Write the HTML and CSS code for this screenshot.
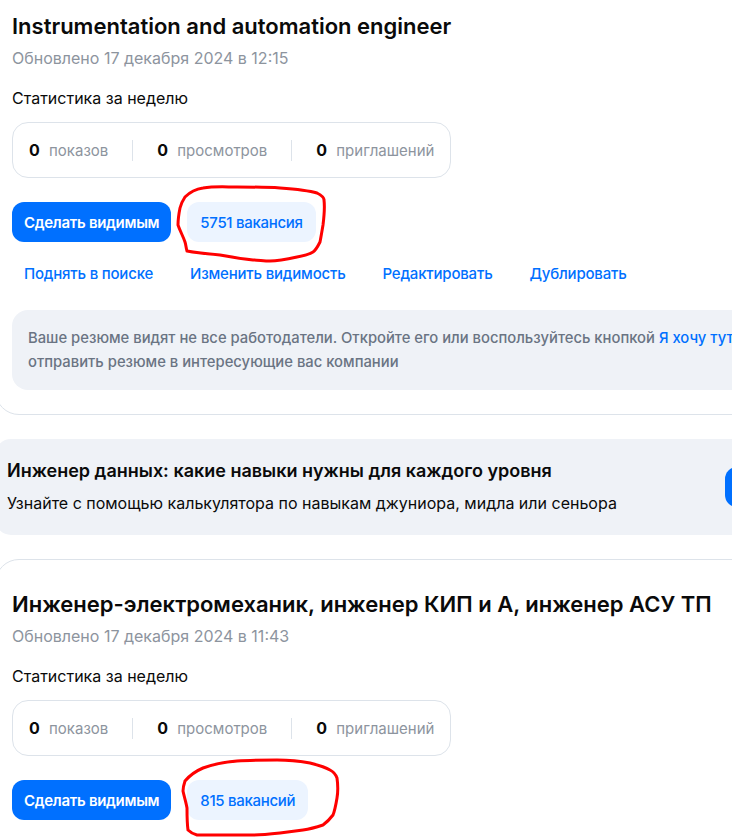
FILE: index.html
```html
<!DOCTYPE html>
<html>
<head>
  <meta charset="utf-8">
  <link rel="stylesheet" href="styles.css">
</head>
<body>
  <div class="page">
    <div class="resume-card">
      <div class="resume-title">Instrumentation and automation engineer</div>
      <div class="resume-updated">Обновлено 17 декабря 2024 в 12:15</div>

      <div class="stats-label">Статистика за неделю</div>
      <div class="stats">
        <div class="stat"><b>0</b> показов</div>
        <div class="stat-divider"></div>
        <div class="stat"><b>0</b> просмотров</div>
        <div class="stat-divider"></div>
        <div class="stat"><b>0</b> приглашений</div>
      </div>

      <div class="actions">
        <button class="btn-primary">Сделать видимым</button>
        <button class="btn-pill">5751 вакансия</button>
        <!-- hand drawn marker -->
        <svg class="scribble scribble-first" viewBox="172 182 180 90" width="180" height="90">
          <path d="M185 197 C190 192 196 189 203 188 C215 186 226 187 237 187 C252 187 266 187 280 188 C294 189 307 190 317 193 C321 195 324 197 324 200 C325 208 324 217 323 225 C322 231 321 237 320 242 C318 246 316 250 313 252 C308 255 303 256 297 257 C288 259 279 261 270 261 C264 261 258 260 253 260 C242 259 231 257 220 255 C209 254 198 253 187 251 C186 248 186 245 185 242 C183 236 180 231 178 225 C178 219 179 213 180 208 C181 204 183 200 185 197"/>
        </svg>
      </div>

      <div class="links">
        <a class="link">Поднять в поиске</a>
        <a class="link">Изменить видимость</a>
        <a class="link">Редактировать</a>
        <a class="link">Дублировать</a>
      </div>

      <div class="notice">
        Ваше резюме видят не все работодатели. Откройте его или воспользуйтесь кнопкой <a class="notice-link">Я хочу тут работать</a>, чтобы отправить резюме в интересующие вас компании
      </div>
    </div>

    <div class="promo">
      <div class="promo-text">
        <div class="promo-title">Инженер данных: какие навыки нужны для каждого уровня</div>
        <div class="promo-sub">Узнайте с помощью калькулятора по навыкам джуниора, мидла или сеньора</div>
      </div>
      <button class="btn-primary">Рассчитать</button>
    </div>

    <div class="resume-card">
      <div class="resume-title">Инженер-электромеханик, инженер КИП и А, инженер АСУ ТП</div>
      <div class="resume-updated">Обновлено 17 декабря 2024 в 11:43</div>

      <div class="stats-label">Статистика за неделю</div>
      <div class="stats">
        <div class="stat"><b>0</b> показов</div>
        <div class="stat-divider"></div>
        <div class="stat"><b>0</b> просмотров</div>
        <div class="stat-divider"></div>
        <div class="stat"><b>0</b> приглашений</div>
      </div>

      <div class="actions">
        <button class="btn-primary">Сделать видимым</button>
        <button class="btn-pill">815 вакансий</button>
        <svg class="scribble scribble-second" viewBox="172 758 180 90" width="180" height="90">
          <path d="M185 783 C190 777 196 773 203 770 C214 766 226 764 237 763 C250 762 264 762 277 762 C289 762 300 763 310 765 C318 767 325 769 330 772 C334 774 336 777 337 780 C338 787 338 794 337 800 C336 806 335 812 333 817 C330 821 327 824 323 827 C317 829 310 831 303 832 C295 833 288 834 280 835 C271 836 262 837 253 837 C242 837 231 837 220 837 C212 837 204 837 197 837 C193 836 190 834 188 832 C187 825 187 817 187 810 C186 804 184 798 183 793 C183 789 184 786 185 783"/>
        </svg>
      </div>

      <div class="links">
        <a class="link">Поднять в поиске</a>
        <a class="link">Изменить видимость</a>
        <a class="link">Редактировать</a>
        <a class="link">Дублировать</a>
      </div>
    </div>
  </div>
</body>
</html>
```

FILE: styles.css
```css
:root {
  --text: #0a0a0a;
  --muted: #8d949e;
  --notice-text: #6a7483;
  --blue: #0070ff;
  --blue-soft: #ecf4ff;
  --gray-bg: #eff2f7;
  --border: #dde3ea;
  --radius: 12px;
  --font-sans: "Inter", "Roboto", "Noto Sans", sans-serif;
}

html,
body {
  overflow: hidden;
}

body {
  margin: 0;
  background: #fff;
  color: var(--text);
  font-family: var(--font-sans);
  font-size: 16px;
  line-height: 24px;
}

.page {
  width: 937px;
  margin: -19px 0 0 -5px;
}

.resume-card {
  border: 1px solid var(--border);
  border-radius: 24px;
  padding: 30px 16px 24px;
}

.resume-title {
  font-size: 22px;
  line-height: 28px;
  font-weight: 600;
  margin-bottom: 6px;
}

.resume-updated {
  color: var(--muted);
}

.stats-label {
  margin-top: 16px;
}

.stats {
  display: inline-flex;
  align-items: center;
  gap: 24px;
  margin-top: 12px;
  padding: 15px 16px 14px;
  border: 1px solid var(--border);
  border-radius: 16px;
  color: var(--muted);
  font-size: 15px;
}

.stat b {
  color: var(--text);
  font-weight: 700;
  font-size: 16px;
  margin-right: 5px;
}

.stat-divider {
  width: 1px;
  height: 21px;
  background: var(--border);
}

/* buttons */
.actions {
  position: relative;
  display: flex;
  gap: 16px;
  margin-top: 24px;
}

.btn-primary,
.btn-pill {
  height: 40px;
  padding: 0 12px;
  border: 0;
  border-radius: var(--radius);
  font-family: var(--font-sans);
  font-size: 15px;
  letter-spacing: -0.3px;
  cursor: pointer;
}

.btn-primary {
  background: var(--blue);
  color: #fff;
  font-weight: 600;
}

.btn-pill {
  padding: 0 13px;
  background: var(--blue-soft);
  color: var(--blue);
  font-weight: 500;
}

.scribble {
  position: absolute;
  left: 160px;
  pointer-events: none;
}

.scribble path {
  fill: none;
  stroke: #f00;
  stroke-width: 3;
  stroke-linecap: round;
}

.scribble-first {
  top: -20px;
}

.scribble-second {
  top: -24px;
}

.links {
  display: flex;
  gap: 13px;
  margin-top: 12px;
}

.link {
  padding: 8px 12px;
  color: var(--blue);
  font-size: 15px;
  font-weight: 500;
  letter-spacing: -0.2px;
  cursor: pointer;
}

.notice {
  margin-top: 16px;
  padding: 16px;
  background: var(--gray-bg);
  border-radius: 16px;
  color: var(--notice-text);
  font-size: 14.8px;
  font-weight: 500;
}

.notice-link {
  color: var(--blue);
}

/* promo banner between resumes */
.promo {
  display: flex;
  align-items: center;
  margin: 24px 0;
  padding: 20px 11px 20px 12px;
  background: var(--gray-bg);
  border-radius: 16px;
}

.promo-text {
  width: 718px;
}

.promo-title {
  font-size: 18px;
  font-weight: 600;
}

.promo-sub {
  margin-top: 8px;
}
```
